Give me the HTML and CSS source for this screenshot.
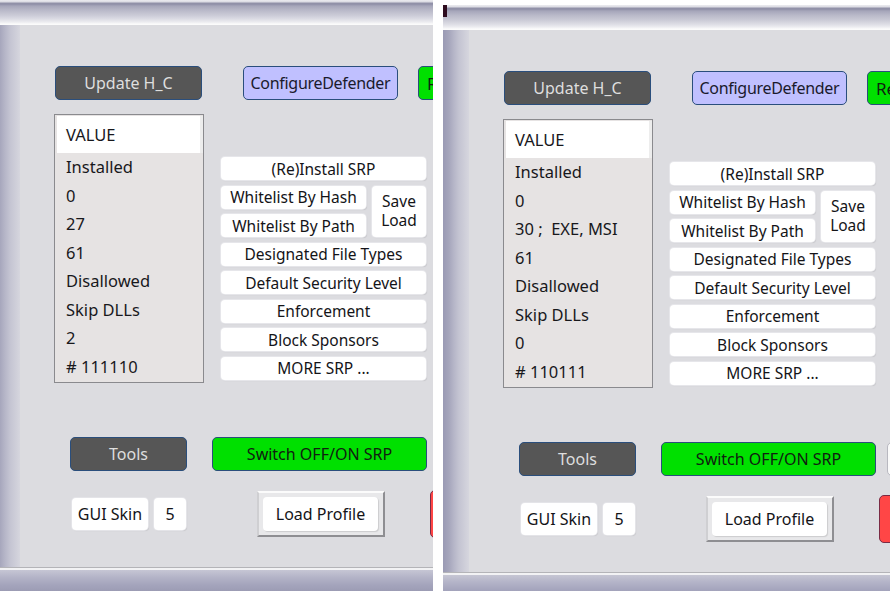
FILE: index.html
```html
<!DOCTYPE html>
<html>
<head>
<meta charset="utf-8">
<link rel="stylesheet" href="styles.css">
</head>
<body>
<div class="screen">
  <div class="win win-left">
    <div class="titlebar"></div>
    <div class="frame">
      <div class="side"></div>
      <div class="content">
        <div class="toprow">
          <div class="btn btn-dark btn-update">Update H_C</div>
          <div class="btn btn-lav btn-defender">ConfigureDefender</div>
          <div class="btn btn-green btn-rec">Re</div>
        </div>
        <div class="middle">
          <div class="listbox">
            <div class="lb-head">VALUE</div>
            <div class="lb-row">Installed</div>
            <div class="lb-row">0</div>
            <div class="lb-row">27</div>
            <div class="lb-row">61</div>
            <div class="lb-row">Disallowed</div>
            <div class="lb-row">Skip DLLs</div>
            <div class="lb-row">2</div>
            <div class="lb-row"># 111110</div>
          </div>
          <div class="srpcol">
            <div class="sbtn">(Re)Install SRP</div>
            <div class="wl">
              <div class="wl-col">
                <div class="sbtn">Whitelist By Hash</div>
                <div class="sbtn">Whitelist By Path</div>
              </div>
              <div class="sbtn saveload"><span>Save</span><span>Load</span></div>
            </div>
            <div class="sbtn">Designated File Types</div>
            <div class="sbtn">Default Security Level</div>
            <div class="sbtn">Enforcement</div>
            <div class="sbtn">Block Sponsors</div>
            <div class="sbtn">MORE SRP ...</div>
          </div>
        </div>
        <div class="toolsrow">
          <div class="btn btn-dark btn-tools">Tools</div>
          <div class="btn btn-green btn-switch">Switch OFF/ON SRP</div>
          <div class="btn btn-white btn-extra"></div>
        </div>
        <div class="profrow">
          <div class="wbox skin">GUI Skin</div>
          <div class="wbox skinnum">5</div>
          <div class="profile"><div class="profile-in">Load Profile</div></div>
          <div class="btn btn-red"></div>
        </div>
      </div>
    </div>
    <div class="bottombar"></div>
  </div>

  <div class="win win-right">
    <div class="titlebar"><span class="corner"></span></div>
    <div class="frame">
      <div class="side"></div>
      <div class="content">
        <div class="toprow">
          <div class="btn btn-dark btn-update">Update H_C</div>
          <div class="btn btn-lav btn-defender">ConfigureDefender</div>
          <div class="btn btn-green btn-rec">Re</div>
        </div>
        <div class="middle">
          <div class="listbox">
            <div class="lb-head">VALUE</div>
            <div class="lb-row">Installed</div>
            <div class="lb-row">0</div>
            <div class="lb-row">30 ;&nbsp; EXE, MSI</div>
            <div class="lb-row">61</div>
            <div class="lb-row">Disallowed</div>
            <div class="lb-row">Skip DLLs</div>
            <div class="lb-row">0</div>
            <div class="lb-row"># 110111</div>
          </div>
          <div class="srpcol">
            <div class="sbtn">(Re)Install SRP</div>
            <div class="wl">
              <div class="wl-col">
                <div class="sbtn">Whitelist By Hash</div>
                <div class="sbtn">Whitelist By Path</div>
              </div>
              <div class="sbtn saveload"><span>Save</span><span>Load</span></div>
            </div>
            <div class="sbtn">Designated File Types</div>
            <div class="sbtn">Default Security Level</div>
            <div class="sbtn">Enforcement</div>
            <div class="sbtn">Block Sponsors</div>
            <div class="sbtn">MORE SRP ...</div>
          </div>
        </div>
        <div class="toolsrow">
          <div class="btn btn-dark btn-tools">Tools</div>
          <div class="btn btn-green btn-switch">Switch OFF/ON SRP</div>
          <div class="btn btn-white btn-extra"></div>
        </div>
        <div class="profrow">
          <div class="wbox skin">GUI Skin</div>
          <div class="wbox skinnum">5</div>
          <div class="profile"><div class="profile-in">Load Profile</div></div>
          <div class="btn btn-red"></div>
        </div>
      </div>
    </div>
    <div class="bottombar"></div>
  </div>
</div>
</body>
</html>
```

FILE: styles.css
```css
html, body {
  margin: 0;
  padding: 0;
  background: #ffffff;
}
body {
  font-family: "Noto Sans", "DejaVu Sans", sans-serif;
  color: #141418;
}
.screen {
  display: flex;
  align-items: flex-start;
  width: 890px;
  height: 591px;
  overflow: hidden;
}
.win {
  flex: none;
  display: flex;
  flex-direction: column;
  height: 591px;
  overflow: hidden;
  background: #dcdce0;
  position: relative;
}
.win-left {
  width: 439px;
  margin-left: -6px;
}
.win-right {
  width: 460px;
  margin-left: 10px;
  margin-top: 5px;
}
.titlebar {
  flex: none;
  height: 25px;
  position: relative;
  background: linear-gradient(to bottom,
    #ececf0 0px, #dadae2 2px, #9494aa 3px, #8e8ea6 4px, #a6a6ba 6px,
    #b8b8c8 10px, #cacad6 15px, #dcdce4 19px, #ececf0 22px, #fbfbfb 24px, #fbfbfb 25px);
}
.corner {
  position: absolute;
  left: 0;
  top: 0;
  width: 4px;
  height: 12px;
  background: #2e0c1e;
}
.frame {
  flex: none;
  display: flex;
  height: 542px;
}
.side {
  flex: none;
  width: 26px;
  background: linear-gradient(to right,
    #9a9ab4 0px, #a6a6bc 6px, #b6b6c8 11px, #c4c4d2 16px, #cdcdd8 21px, #d6d6de 26px);
}
.content {
  flex: 1;
  min-width: 0;
  padding: 41px 0 0 34px;
  background: #dcdce0;
  white-space: nowrap;
}

/* generic buttons */
.btn {
  flex: none;
  box-sizing: border-box;
  height: 34px;
  border: 1px solid #2a4e7c;
  border-radius: 5px;
  display: flex;
  align-items: center;
  justify-content: center;
  font-size: 16px;
  overflow: hidden;
}
.btn-dark {
  background: #565656;
  color: #dedede;
}
.btn-lav {
  background: #c0c0ff;
  color: #1a1a2c;
  letter-spacing: -0.3px;
}
.btn-green {
  background: #00e000;
  color: #102010;
}
.btn-white {
  background: #fafafa;
  border-color: #b8b8c0;
}
.btn-red {
  background: #ff4646;
  border-color: #7a2a44;
}

/* top row */
.toprow {
  display: flex;
  height: 34px;
  margin-left: 1px;
}
.btn-update {
  width: 147px;
  margin-right: 41px;
}
.btn-defender {
  width: 155px;
  margin-right: 20px;
}
.btn-rec {
  width: 110px;
  justify-content: flex-start;
  padding-left: 8px;
  font-size: 17px;
}

/* middle */
.middle {
  display: flex;
  align-items: flex-start;
  margin-top: 14px;
}
.listbox {
  flex: none;
  box-sizing: border-box;
  width: 150px;
  border: 1px solid #8a8a8e;
  padding: 1px 3px 1px 2px;
  background: #e6e3e3;
  font-size: 16.5px;
  color: #18181c;
}
.lb-head {
  height: 37px;
  line-height: 37px;
  padding-left: 9px;
  background: #ffffff;
  border-right: 3px solid #ededed;
  margin-right: -3px;
}
.lb-row {
  height: 28.5px;
  line-height: 28.5px;
  padding-left: 9px;
}
.srpcol {
  flex: none;
  width: 205px;
  margin-left: 17px;
  margin-top: 43px;
  display: flex;
  flex-direction: column;
  gap: 5.5px;
}
.sbtn {
  box-sizing: border-box;
  height: 23px;
  background: #ffffff;
  border-radius: 4px;
  box-shadow: 0 0 0 1px #e6e6ea, 1px 1px 1px rgba(0, 0, 0, 0.14);
  display: flex;
  align-items: center;
  justify-content: center;
  font-size: 15.5px;
  color: #141418;
}
.wl {
  display: flex;
  gap: 6px;
}
.wl-col {
  width: 145px;
  display: flex;
  flex-direction: column;
  gap: 5.5px;
}
.saveload {
  width: 54px;
  height: 51.5px;
  flex-direction: column;
  font-size: 15.5px;
  line-height: 21px;
}
.saveload span {
  display: block;
  height: 19px;
  line-height: 19px;
  overflow: visible;
}

/* tools row */
.toolsrow {
  display: flex;
  height: 34px;
  margin-top: 54px;
  margin-left: 16px;
}
.btn-tools {
  width: 117px;
  margin-right: 25px;
}
.btn-switch {
  width: 215px;
  margin-right: 11px;
}
.btn-extra {
  width: 80px;
}

/* profile row */
.profrow {
  display: flex;
  align-items: center;
  height: 48px;
  margin-top: 19px;
  margin-left: 18px;
}
.wbox {
  flex: none;
  box-sizing: border-box;
  height: 32px;
  background: #ffffff;
  border-radius: 4px;
  box-shadow: 0 0 0 1px #e4e4e8, 1px 1px 1px rgba(0, 0, 0, 0.12);
  display: flex;
  align-items: center;
  justify-content: center;
  font-size: 16px;
}
.skin {
  width: 76px;
}
.skinnum {
  width: 32px;
  margin-left: 6px;
}
.profile {
  flex: none;
  box-sizing: border-box;
  width: 128px;
  height: 46px;
  margin-left: 71px;
  padding: 4px 5px 4px 4px;
  background: #e8e8ea;
  border: 2px solid;
  border-color: #fbfbfb #8e8e92 #8e8e92 #cfcfd2;
}
.profile-in {
  height: 100%;
  background: #ffffff;
  border-radius: 4px;
  box-shadow: 1px 1px 1px rgba(0, 0, 0, 0.12);
  display: flex;
  align-items: center;
  justify-content: center;
  font-size: 16px;
}
.btn-red {
  width: 80px;
  height: 48px;
  margin-left: 45px;
}

.bottombar {
  flex: none;
  height: 24px;
  background: linear-gradient(to bottom,
    #b4b4b8 0px, #b4b4b8 1px, #f2f2f4 1px, #f2f2f4 3px, #c6c6d4 3px,
    #b4b4c8 10px, #a4a4bc 18px, #9c9cb4 24px);
}
```
